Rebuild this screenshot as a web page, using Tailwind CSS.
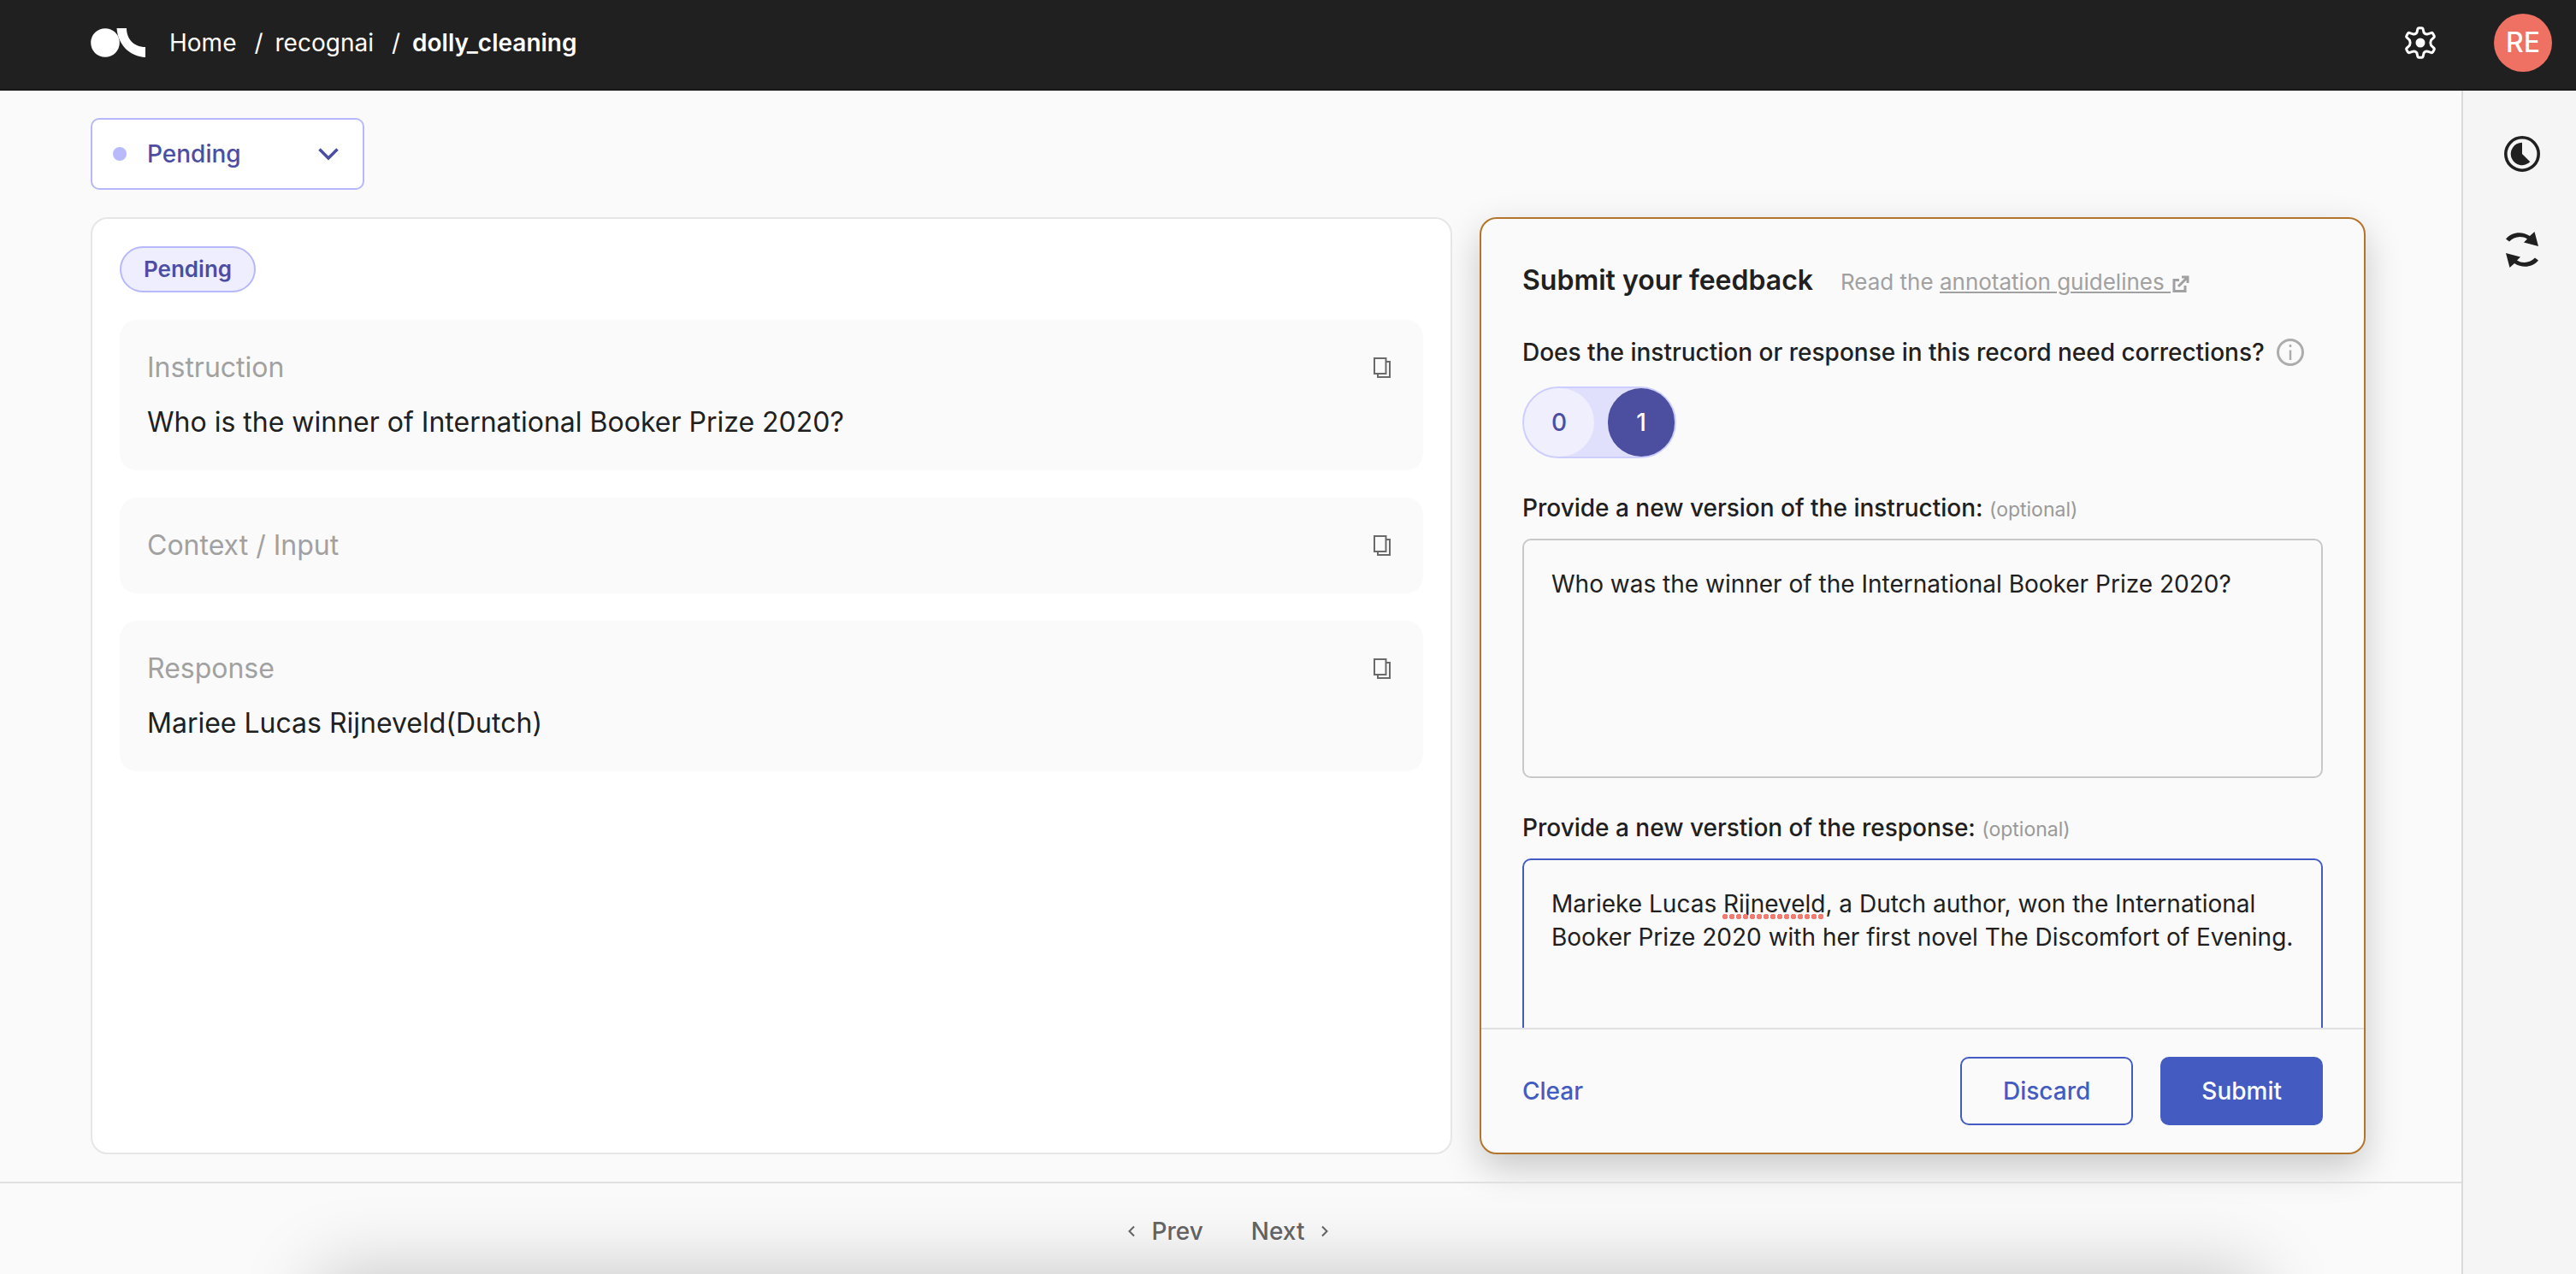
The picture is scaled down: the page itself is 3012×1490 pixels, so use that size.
<!DOCTYPE html>
<html lang="en">
<head>
<meta charset="utf-8">
<title>dolly_cleaning</title>
<script src="https://cdn.jsdelivr.net/npm/@tailwindcss/browser@4"></script>
</head>
<body class="font-['Inter',sans-serif] text-[28px] leading-10 text-[#202020]">
<div class="relative flex h-screen flex-col overflow-hidden bg-[#fafafa]">
  <header class="flex h-[106px] shrink-0 items-center border-b-2 border-[#191919] bg-[#202020] pr-7 pl-[106px] pb-1 text-white">
    <a href="#" aria-label="Argilla" class="mr-7">
      <svg class="h-[34px] w-16" viewBox="0 0 64 34" fill="#fff"><circle cx="17" cy="17" r="16.800"/><path d="M30.500 0H42C42 12 50 22 64 22V34C46 33 32 20 30.500 0Z"/></svg>
    </a>
    <nav aria-label="Breadcrumb" class="flex grow">
      <a href="#" class="mr-[21px]">Home</a><span class="mr-3.5">/</span>
      <a href="#" class="mr-[21px]">recognai</a><span class="mr-3.5">/</span>
      <a href="#" class="font-semibold">dolly_cleaning</a>
    </nav>
    <button aria-label="Settings" class="mr-[66px]">
      <svg class="h-10 w-10" viewBox="0 0 40 40" fill="none" stroke="#fff" stroke-width="3" stroke-linejoin="round"><path d="M17 3.500Q17.300 2.700 18.300 2.700H21.700Q22.700 2.700 23 3.500L24.200 8.300Q26 10.500 28.500 9.800L33 8.300Q34 8.200 34.500 9L36.200 12Q36.700 13 36 13.700L32.500 17Q31.200 20 32.500 23L36 26.300Q36.700 27 36.200 28L34.500 31Q34 31.800 33 31.700L28.500 30.200Q26 29.500 24.200 31.700L23 36.500Q22.700 37.300 21.700 37.300H18.300Q17.300 37.300 17 36.500L15.800 31.700Q14 29.500 11.500 30.200L7 31.700Q6 31.800 5.500 31L3.800 28Q3.300 27 4 26.300L7.500 23Q8.800 20 7.500 17L4 13.700Q3.300 13 3.800 12L5.500 9Q6 8.200 7 8.300L11.500 9.800Q14 10.500 15.800 8.300Z"/><circle cx="20" cy="20" r="5.500" fill="#fff" stroke="none"/></svg>
    </button>
    <button class="size-[68px] rounded-full bg-[#ee7163] text-[32px] font-medium">RE</button>
  </header>

  <div class="flex min-h-0 grow">
    <main class="flex min-w-0 grow flex-col">
      <div class="flex min-h-0 grow flex-col gap-8 py-8 pr-28 pl-[106px]">
        <div class="relative w-80 shrink-0">
          <select aria-label="Record status" class="h-[84px] w-full appearance-none rounded-[10px] border-2 border-[#b7b8fb] bg-white pl-16 font-medium text-[#4c4ea3]"><option>Pending</option></select>
          <span class="pointer-events-none absolute top-[34px] left-[26px] size-4 rounded-full bg-[#b8bafc]"></span>
          <svg class="pointer-events-none absolute top-[34px] right-[30px] h-4 w-6" viewBox="0 0 24 16" fill="none" stroke="#4c4ea3" stroke-width="3.500"><path d="M1.500 2.500L12 13L22.500 2.500"/></svg>
        </div>

        <div class="grid min-h-0 grow grid-cols-[1592fr_1036fr] grid-rows-[minmax(0,1fr)] gap-8">
          <section aria-label="Record" class="relative z-10 flex flex-col items-start gap-8 rounded-[20px] border-2 border-[#e6e6e6] bg-white p-8 text-[32px] leading-[48px]">
            <span class="flex h-[54px] items-center rounded-full border-2 border-[#b7b8fb] bg-[#eeeefe] px-[26px] text-[26px] font-semibold text-[#4c4ea3]">Pending</span>
            <article class="flex w-full flex-col gap-4 rounded-[20px] bg-[#fafafa] p-8">
              <div class="flex items-center justify-between pr-1.5">
                <h2 class="text-[#a1a1a1]">Instruction</h2>
                <button aria-label="Copy instruction"><svg class="h-6 w-5" viewBox="0 0 20 24" fill="none" stroke="#6a6a6a" stroke-width="2"><path d="M1 1H14.500V19H1ZM15 5H19V23H5V19.500"/></svg></button>
              </div>
              <p>Who is the winner of International Booker Prize 2020?</p>
            </article>
            <article class="flex w-full flex-col gap-4 rounded-[20px] bg-[#fafafa] p-8">
              <div class="flex items-center justify-between pr-1.5">
                <h2 class="text-[#a1a1a1]">Context / Input</h2>
                <button aria-label="Copy context"><svg class="h-6 w-5" viewBox="0 0 20 24" fill="none" stroke="#6a6a6a" stroke-width="2"><path d="M1 1H14.500V19H1ZM15 5H19V23H5V19.500"/></svg></button>
              </div>
            </article>
            <article class="flex w-full flex-col gap-4 rounded-[20px] bg-[#fafafa] p-8">
              <div class="flex items-center justify-between pr-1.5">
                <h2 class="text-[#a1a1a1]">Response</h2>
                <button aria-label="Copy response"><svg class="h-6 w-5" viewBox="0 0 20 24" fill="none" stroke="#6a6a6a" stroke-width="2"><path d="M1 1H14.500V19H1ZM15 5H19V23H5V19.500"/></svg></button>
              </div>
              <p>Mariee Lucas Rijneveld(Dutch)</p>
            </article>
          </section>

          <form class="flex min-h-0 flex-col overflow-hidden rounded-[20px] border-2 border-[#b3752b] bg-[#fafafa] shadow-[0_16px_44px_rgba(0,0,0,0.2)]">
            <div class="flex min-h-0 grow flex-col gap-[38px] overflow-hidden px-12 pt-12">
              <div class="flex shrink-0 items-baseline gap-8 leading-[48px]">
                <h1 class="text-[32px] font-semibold">Submit your feedback</h1>
                <p class="text-[26px] text-[#a1a1a1]">Read the <a href="#" class="underline decoration-2 underline-offset-2">annotation guidelines <svg class="ml-0.5 inline h-5 w-5 align-[-3px]" viewBox="0 0 20 20" fill="none" stroke="#a1a1a1" stroke-width="3"><path d="M8 5.500H2V18.500H15V12M7 13L17.500 2.500M11 2H18V9"/></svg></a></p>
              </div>
              <fieldset class="flex shrink-0 flex-col gap-5">
                <div class="flex items-center gap-3.5">
                  <span id="q1" class="font-medium">Does the instruction or response in this record need corrections?</span>
                  <button type="button" aria-label="More information"><svg class="size-8" viewBox="0 0 32 32" fill="none" stroke="#acacac" stroke-width="3"><circle cx="16" cy="16" r="14.500"/><path d="M16 13.500V25M16 7V10" stroke-width="2.500"/></svg></button>
                </div>
                <div role="radiogroup" aria-labelledby="q1" class="flex h-[84px] items-center gap-4 self-start rounded-full border-2 border-[#cdcdff] bg-[#e0e0fc] font-medium">
                  <label class="flex h-20 w-[82px] items-center justify-center rounded-full bg-[#efeffd] text-[#4c4ea3]"><input type="radio" name="fix" class="sr-only">0</label>
                  <label class="flex h-20 w-[78px] items-center justify-center rounded-full bg-[#4c4f9f] text-white"><input type="radio" name="fix" checked class="sr-only">1</label>
                </div>
              </fieldset>
              <div class="flex shrink-0 flex-col gap-4">
                <label for="instruction" class="font-medium">Provide a new version of the instruction: <span class="text-[23px] leading-none font-normal text-[#999999]">(optional)</span></label>
                <textarea id="instruction" class="h-[280px] resize-none rounded-[10px] border-2 border-[#c8c8c8] p-8 leading-[39px]">Who was the winner of the International Booker Prize 2020?</textarea>
              </div>
              <div class="relative flex shrink-0 flex-col gap-4">
                <label for="response" class="font-medium">Provide a new verstion of the response: <span class="text-[23px] leading-none font-normal text-[#999999]">(optional)</span></label>
                <textarea id="response" spellcheck="false" class="h-[280px] resize-none rounded-[10px] border-2 border-[#445bc2] py-8 pr-6 pl-8 leading-[39px]">Marieke Lucas Rijneveld, a Dutch author, won the International Booker Prize 2020 with her first novel The Discomfort of Evening.</textarea>
                <span class="pointer-events-none absolute top-[120px] left-[233px] h-2 w-[120px] bg-[radial-gradient(circle,#f47b6f_3px,transparent_3.500px)] bg-[size:8px_8px]"></span>
              </div>
            </div>
            <div class="flex h-[146px] shrink-0 items-center gap-8 border-t-2 border-[#e0e0e0] px-12 font-medium">
              <button type="reset" class="mr-auto text-[#445bc2]">Clear</button>
              <button type="button" class="h-20 rounded-[10px] border-2 border-[#445bc2] px-12 text-[#445bc2]">Discard</button>
              <button type="submit" class="h-20 rounded-[10px] bg-[#445bc2] px-12 text-white">Submit</button>
            </div>
          </form>
        </div>
      </div>
      <nav aria-label="Records" class="flex h-[108px] shrink-0 items-center justify-center gap-14 border-t-2 border-[#e0e0e0] pt-1.5 pr-1.5 font-medium text-[#656565]">
        <button class="flex items-center gap-5"><svg class="h-3.5 w-2" viewBox="0 0 8 14" fill="none" stroke="#656565" stroke-width="2"><path d="M7 1.500L1.500 7L7 12.500"/></svg>Prev</button>
        <button class="flex items-center gap-5">Next<svg class="h-3.5 w-2" viewBox="0 0 8 14" fill="none" stroke="#656565" stroke-width="2"><path d="M1 1.500L6.500 7L1 12.500"/></svg></button>
      </nav>
    </main>

    <aside class="flex w-[134px] shrink-0 flex-col items-center gap-[70px] border-l-2 border-[#dadada] bg-[#f5f5f5] pt-[53px] pl-1.5">
      <button aria-label="Progress"><svg class="size-[42px]" viewBox="0 0 42 42"><circle cx="21" cy="21" r="19.200" fill="none" stroke="#202020" stroke-width="3.600"/><path d="M21 21V7.800A13.200 13.200 0 1 0 30.300 30.300Z" fill="#202020"/></svg></button>
      <button aria-label="Refresh"><svg class="h-[42px] w-10" viewBox="0 0 40 42" fill="#202020"><path d="M1 8.500C8 0 20 -1 29 5L34.500 0L39 17L22 12.500L26 8.500C19 4 10 6 5 11.500Z"/><path d="M39 33.500C32 42 20 43 11 37L5.500 42L1 25L18 29.500L14 33.500C21 38 30 36 35 30.500Z"/></svg></button>
    </aside>
  </div>
  <div class="pointer-events-none absolute inset-x-[373px] top-full h-48 shadow-[0_0_90px_rgba(0,0,0,0.22)]"></div>
</div>
</body>
</html>
